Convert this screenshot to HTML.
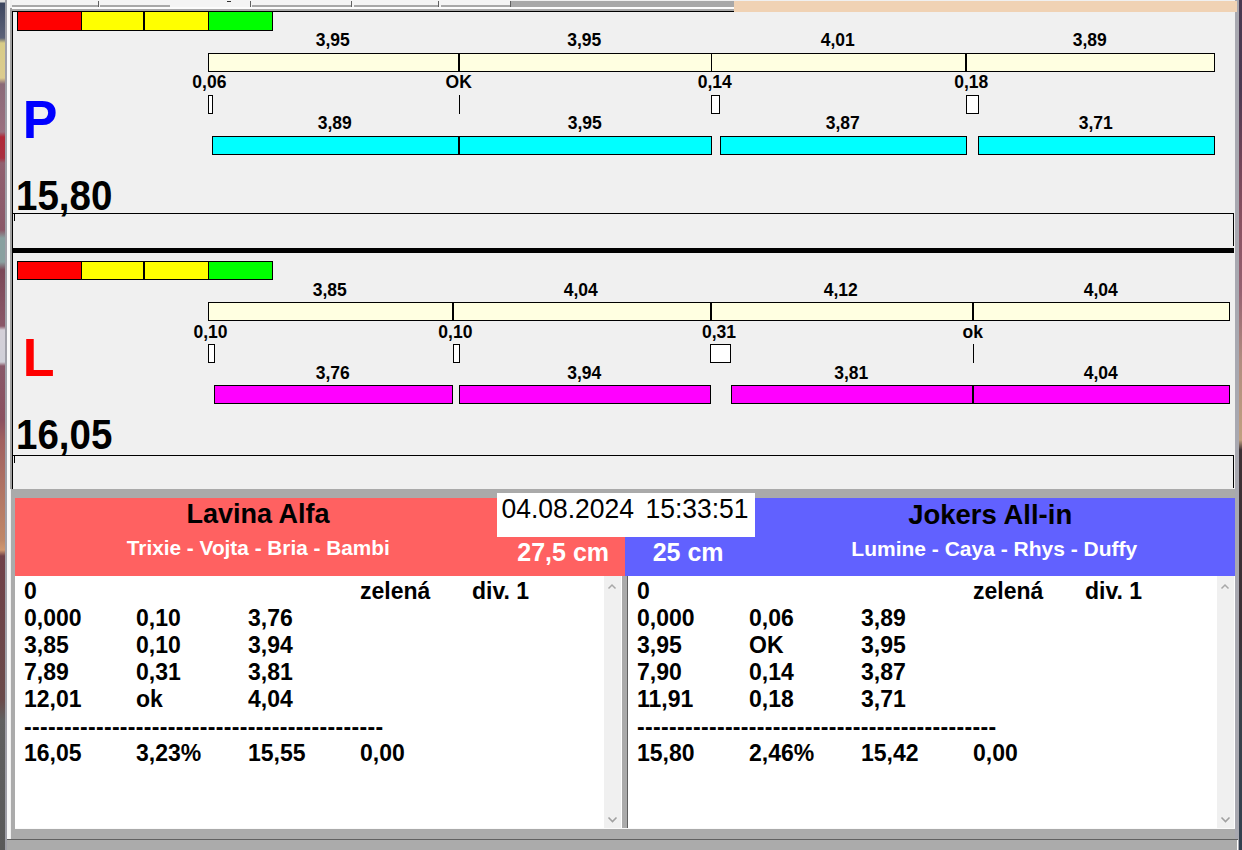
<!DOCTYPE html>
<html><head><meta charset="utf-8">
<style>
html,body{margin:0;padding:0;width:1242px;height:850px;overflow:hidden;background:#f0f0f0;font-family:"Liberation Sans",sans-serif;}
.a{position:absolute;}
.b{font-weight:bold;}
.lbl{position:absolute;font-weight:bold;font-size:17px;line-height:17px;white-space:pre;text-align:center;width:120px;color:#000;}
.bar{position:absolute;box-sizing:border-box;border:1px solid #000;}
.lb{position:absolute;font-weight:bold;font-size:22px;line-height:27px;white-space:pre;color:#000;letter-spacing:0.7px;}
</style></head><body>
<!-- left desktop strip -->
<div class="a" style="left:0px;top:0;width:5px;height:850px;background:linear-gradient(#e0e0e0 0px,#e0e0e0 2px,#3c4660 3px,#5c6278 38px,#d8cc88 43px,#dccc90 78px,#8a6a78 84px,#9a7080 132px,#b02838 137px,#a83040 158px,#906070 163px,#8a5868 230px,#88a0a0 238px,#8aa0a0 262px,#7a4858 270px,#8a5868 326px,#d4d0d8 330px,#d0d0d8 362px,#885868 366px,#8a5060 420px,#a06060 440px,#c08868 540px,#d09870 550px,#704048 556px,#6a4a4a 700px,#606060 720px,#5a5a5a 850px)"></div>
<div class="a" style="left:5px;top:0;width:2px;height:850px;background:#a0a0a8"></div>
<div class="a" style="left:7px;top:0;width:3px;height:850px;background:#f8f8f8"></div>
<div class="a" style="left:10px;top:8px;width:2px;height:481px;background:#a0a0a0"></div>
<!-- right desktop strip -->
<div class="a" style="left:1235px;top:0;width:4px;height:850px;background:#a8a8b0"></div>
<div class="a" style="left:1239px;top:0;width:3px;height:850px;background:linear-gradient(#483850 0px,#4a3a52 90px,#704458 160px,#885060 220px,#946070 290px,#b08c80 360px,#c0a080 440px,#3c3034 450px,#3a3036 630px,#384048 700px,#334050 850px)"></div>

<!-- tab strip -->
<div class="a" style="left:12px;top:0;width:498px;height:7px;background:#f4f4f4"></div>
<div class="a" style="left:12px;top:5px;width:86px;height:2px;background:#a8a8a8"></div>
<div class="a" style="left:100px;top:5px;width:70px;height:2px;background:#a8a8a8"></div>
<div class="a" style="left:252px;top:5px;width:99px;height:2px;background:#a8a8a8"></div>
<div class="a" style="left:354px;top:5px;width:84px;height:2px;background:#a8a8a8"></div>
<div class="a" style="left:441px;top:5px;width:69px;height:2px;background:#a8a8a8"></div>
<div class="a" style="left:98px;top:1px;width:1px;height:6px;background:#606060"></div>
<div class="a" style="left:250px;top:1px;width:1px;height:6px;background:#606060"></div>
<div class="a" style="left:351px;top:1px;width:1px;height:6px;background:#606060"></div>
<div class="a" style="left:438px;top:1px;width:1px;height:6px;background:#606060"></div>
<div class="a" style="left:510px;top:1px;width:225px;height:6px;background:#a8a8a8"></div>
<div class="a" style="left:510px;top:1px;width:1px;height:6px;background:#606060"></div>
<div class="a" style="left:12px;top:7px;width:722px;height:2px;background:#fcfcfc"></div>
<div class="a" style="left:12px;top:9px;width:722px;height:2px;background:#a8a8a8"></div>
<div class="a" style="left:12px;top:11px;width:722px;height:1px;background:#000"></div>
<div class="a" style="left:734px;top:1px;width:503px;height:11px;background:#f0d2b4"></div>

<div class="a" style="left:227px;top:1px;width:4px;height:1px;background:#303030"></div>
<div class="a" style="left:12px;top:11px;width:1px;height:478px;background:#000"></div>
<div class="a" style="left:17px;top:11px;width:256px;height:20px;background:#ff0000;box-sizing:border-box;border-style:solid;border-color:#000;border-width:1px 0px 1px 1px"></div>
<div class="a" style="left:81px;top:11px;width:63px;height:20px;background:#ffff00;box-sizing:border-box;border-style:solid;border-color:#000;border-width:1px 0px 1px 1px"></div>
<div class="a" style="left:143px;top:11px;width:65px;height:20px;background:#ffff00;box-sizing:border-box;border-style:solid;border-color:#000;border-width:1px 0px 1px 2px"></div>
<div class="a" style="left:208px;top:11px;width:65px;height:20px;background:#00ff00;box-sizing:border-box;border-style:solid;border-color:#000;border-width:1px 1px 1px 1px"></div>
<div class="a" style="left:22.8px;top:93.98px;font-size:52px;line-height:52px;font-weight:bold;color:#0000ff;white-space:pre;letter-spacing:0px;transform:scaleY(1.035);transform-origin:0 44px">P</div>
<div class="a" style="left:208px;top:53px;width:1007px;height:19px;background:#ffffe1;box-sizing:border-box;border-style:solid;border-color:#000;border-width:1px 1px 1px 1px"></div>
<div class="a" style="left:132.70px;top:31.99px;width:400px;text-align:center;font-size:17.5px;line-height:17.5px;font-weight:bold;color:#000;white-space:pre;letter-spacing:0px;">3,95</div>
<div class="a" style="left:384.20px;top:31.99px;width:400px;text-align:center;font-size:17.5px;line-height:17.5px;font-weight:bold;color:#000;white-space:pre;letter-spacing:0px;">3,95</div>
<div class="a" style="left:637.70px;top:31.99px;width:400px;text-align:center;font-size:17.5px;line-height:17.5px;font-weight:bold;color:#000;white-space:pre;letter-spacing:0px;">4,01</div>
<div class="a" style="left:889.70px;top:31.99px;width:400px;text-align:center;font-size:17.5px;line-height:17.5px;font-weight:bold;color:#000;white-space:pre;letter-spacing:0px;">3,89</div>
<div class="a" style="left:458px;top:53px;width:2px;height:19px;background:#000;"></div>
<div class="a" style="left:711px;top:53px;width:1px;height:19px;background:#000;"></div>
<div class="a" style="left:965px;top:53px;width:2px;height:19px;background:#000;"></div>
<div class="a" style="left:9.40px;top:73.99px;width:400px;text-align:center;font-size:17.5px;line-height:17.5px;font-weight:bold;color:#000;white-space:pre;letter-spacing:0px;">0,06</div>
<div class="a" style="left:258.70px;top:73.99px;width:400px;text-align:center;font-size:17.5px;line-height:17.5px;font-weight:bold;color:#000;white-space:pre;letter-spacing:0px;">OK</div>
<div class="a" style="left:514.70px;top:73.99px;width:400px;text-align:center;font-size:17.5px;line-height:17.5px;font-weight:bold;color:#000;white-space:pre;letter-spacing:0px;">0,14</div>
<div class="a" style="left:771.30px;top:73.99px;width:400px;text-align:center;font-size:17.5px;line-height:17.5px;font-weight:bold;color:#000;white-space:pre;letter-spacing:0px;">0,18</div>
<div class="a" style="left:208px;top:95px;width:5px;height:19px;background:#ffffff;box-sizing:border-box;border-style:solid;border-color:#000;border-width:1px 1px 1px 1px"></div>
<div class="a" style="left:459px;top:95px;width:1px;height:19px;background:#000;"></div>
<div class="a" style="left:711px;top:95px;width:9px;height:19px;background:#ffffff;box-sizing:border-box;border-style:solid;border-color:#000;border-width:1px 1px 1px 1px"></div>
<div class="a" style="left:966px;top:95px;width:13px;height:19px;background:#ffffff;box-sizing:border-box;border-style:solid;border-color:#000;border-width:1px 1px 1px 1px"></div>
<div class="a" style="left:212px;top:136px;width:247px;height:19px;background:#00ffff;box-sizing:border-box;border-style:solid;border-color:#000;border-width:1px 1px 1px 1px"></div>
<div class="a" style="left:134.70px;top:114.99px;width:400px;text-align:center;font-size:17.5px;line-height:17.5px;font-weight:bold;color:#000;white-space:pre;letter-spacing:0px;">3,89</div>
<div class="a" style="left:459px;top:136px;width:253px;height:19px;background:#00ffff;box-sizing:border-box;border-style:solid;border-color:#000;border-width:1px 1px 1px 1px"></div>
<div class="a" style="left:384.70px;top:114.99px;width:400px;text-align:center;font-size:17.5px;line-height:17.5px;font-weight:bold;color:#000;white-space:pre;letter-spacing:0px;">3,95</div>
<div class="a" style="left:720px;top:136px;width:247px;height:19px;background:#00ffff;box-sizing:border-box;border-style:solid;border-color:#000;border-width:1px 1px 1px 1px"></div>
<div class="a" style="left:642.70px;top:114.99px;width:400px;text-align:center;font-size:17.5px;line-height:17.5px;font-weight:bold;color:#000;white-space:pre;letter-spacing:0px;">3,87</div>
<div class="a" style="left:978px;top:136px;width:237px;height:19px;background:#00ffff;box-sizing:border-box;border-style:solid;border-color:#000;border-width:1px 1px 1px 1px"></div>
<div class="a" style="left:895.70px;top:114.99px;width:400px;text-align:center;font-size:17.5px;line-height:17.5px;font-weight:bold;color:#000;white-space:pre;letter-spacing:0px;">3,71</div>
<div class="a" style="left:16px;top:177.81px;font-size:38.5px;line-height:38.5px;font-weight:bold;color:#000;white-space:pre;letter-spacing:0px;transform:scaleY(1.09);transform-origin:0 32.6px">15,80</div>
<div class="a" style="left:12px;top:213px;width:1222px;height:33px;background:transparent;box-sizing:border-box;border-style:solid;border-color:#000;border-width:1px 1px 0px 0px"></div>
<div class="a" style="left:14px;top:214px;width:1px;height:7px;background:#000;"></div>
<div class="a" style="left:12px;top:248px;width:1222px;height:5px;background:#000;"></div>
<div class="a" style="left:17px;top:261px;width:256px;height:19px;background:#ff0000;box-sizing:border-box;border-style:solid;border-color:#000;border-width:1px 0px 1px 1px"></div>
<div class="a" style="left:81px;top:261px;width:63px;height:19px;background:#ffff00;box-sizing:border-box;border-style:solid;border-color:#000;border-width:1px 0px 1px 1px"></div>
<div class="a" style="left:143px;top:261px;width:65px;height:19px;background:#ffff00;box-sizing:border-box;border-style:solid;border-color:#000;border-width:1px 0px 1px 2px"></div>
<div class="a" style="left:208px;top:261px;width:65px;height:19px;background:#00ff00;box-sizing:border-box;border-style:solid;border-color:#000;border-width:1px 1px 1px 1px"></div>
<div class="a" style="left:22.8px;top:331.98px;font-size:52px;line-height:52px;font-weight:bold;color:#ff0000;white-space:pre;letter-spacing:0px;transform:scaleY(1.035);transform-origin:0 44px">L</div>
<div class="a" style="left:208px;top:302px;width:1022px;height:19px;background:#ffffe1;box-sizing:border-box;border-style:solid;border-color:#000;border-width:1px 1px 1px 1px"></div>
<div class="a" style="left:129.70px;top:281.99px;width:400px;text-align:center;font-size:17.5px;line-height:17.5px;font-weight:bold;color:#000;white-space:pre;letter-spacing:0px;">3,85</div>
<div class="a" style="left:380.70px;top:281.99px;width:400px;text-align:center;font-size:17.5px;line-height:17.5px;font-weight:bold;color:#000;white-space:pre;letter-spacing:0px;">4,04</div>
<div class="a" style="left:640.70px;top:281.99px;width:400px;text-align:center;font-size:17.5px;line-height:17.5px;font-weight:bold;color:#000;white-space:pre;letter-spacing:0px;">4,12</div>
<div class="a" style="left:900.70px;top:281.99px;width:400px;text-align:center;font-size:17.5px;line-height:17.5px;font-weight:bold;color:#000;white-space:pre;letter-spacing:0px;">4,04</div>
<div class="a" style="left:452px;top:302px;width:2px;height:19px;background:#000;"></div>
<div class="a" style="left:710px;top:302px;width:2px;height:19px;background:#000;"></div>
<div class="a" style="left:972px;top:302px;width:2px;height:19px;background:#000;"></div>
<div class="a" style="left:10.50px;top:323.99px;width:400px;text-align:center;font-size:17.5px;line-height:17.5px;font-weight:bold;color:#000;white-space:pre;letter-spacing:0px;">0,10</div>
<div class="a" style="left:255.40px;top:323.99px;width:400px;text-align:center;font-size:17.5px;line-height:17.5px;font-weight:bold;color:#000;white-space:pre;letter-spacing:0px;">0,10</div>
<div class="a" style="left:519.00px;top:323.99px;width:400px;text-align:center;font-size:17.5px;line-height:17.5px;font-weight:bold;color:#000;white-space:pre;letter-spacing:0px;">0,31</div>
<div class="a" style="left:772.70px;top:323.99px;width:400px;text-align:center;font-size:17.5px;line-height:17.5px;font-weight:bold;color:#000;white-space:pre;letter-spacing:0px;">ok</div>
<div class="a" style="left:208px;top:344px;width:7px;height:19px;background:#ffffff;box-sizing:border-box;border-style:solid;border-color:#000;border-width:1px 1px 1px 1px"></div>
<div class="a" style="left:453px;top:344px;width:7px;height:19px;background:#ffffff;box-sizing:border-box;border-style:solid;border-color:#000;border-width:1px 1px 1px 1px"></div>
<div class="a" style="left:710px;top:344px;width:21px;height:19px;background:#ffffff;box-sizing:border-box;border-style:solid;border-color:#000;border-width:1px 1px 1px 1px"></div>
<div class="a" style="left:973px;top:344px;width:1px;height:19px;background:#000;"></div>
<div class="a" style="left:214px;top:385px;width:239px;height:19px;background:#ff00ff;box-sizing:border-box;border-style:solid;border-color:#000;border-width:1px 1px 1px 1px"></div>
<div class="a" style="left:132.70px;top:364.99px;width:400px;text-align:center;font-size:17.5px;line-height:17.5px;font-weight:bold;color:#000;white-space:pre;letter-spacing:0px;">3,76</div>
<div class="a" style="left:459px;top:385px;width:252px;height:19px;background:#ff00ff;box-sizing:border-box;border-style:solid;border-color:#000;border-width:1px 1px 1px 1px"></div>
<div class="a" style="left:384.20px;top:364.99px;width:400px;text-align:center;font-size:17.5px;line-height:17.5px;font-weight:bold;color:#000;white-space:pre;letter-spacing:0px;">3,94</div>
<div class="a" style="left:731px;top:385px;width:242px;height:19px;background:#ff00ff;box-sizing:border-box;border-style:solid;border-color:#000;border-width:1px 1px 1px 1px"></div>
<div class="a" style="left:651.20px;top:364.99px;width:400px;text-align:center;font-size:17.5px;line-height:17.5px;font-weight:bold;color:#000;white-space:pre;letter-spacing:0px;">3,81</div>
<div class="a" style="left:973px;top:385px;width:257px;height:19px;background:#ff00ff;box-sizing:border-box;border-style:solid;border-color:#000;border-width:1px 1px 1px 1px"></div>
<div class="a" style="left:900.70px;top:364.99px;width:400px;text-align:center;font-size:17.5px;line-height:17.5px;font-weight:bold;color:#000;white-space:pre;letter-spacing:0px;">4,04</div>
<div class="a" style="left:16px;top:416.81px;font-size:38.5px;line-height:38.5px;font-weight:bold;color:#000;white-space:pre;letter-spacing:0px;transform:scaleY(1.09);transform-origin:0 32.6px">16,05</div>
<div class="a" style="left:12px;top:455px;width:1222px;height:33px;background:transparent;box-sizing:border-box;border-style:solid;border-color:#000;border-width:1px 1px 0px 0px"></div>
<div class="a" style="left:14px;top:456px;width:1px;height:7px;background:#000;"></div>
<div class="a" style="left:11px;top:489px;width:1224px;height:9px;background:#aaaaaa;"></div>
<div class="a" style="left:11px;top:497px;width:4px;height:342px;background:#ababab;"></div>
<div class="a" style="left:15px;top:498px;width:610px;height:78px;background:#ff6161;"></div>
<div class="a" style="left:625px;top:498px;width:610px;height:78px;background:#6161ff;"></div>
<div class="a" style="left:497px;top:493px;width:258px;height:44px;background:#ffffff;"></div>
<div class="a" style="left:425.00px;top:496.37px;width:400px;text-align:center;font-size:26.5px;line-height:26.5px;font-weight:normal;color:#000;white-space:pre;letter-spacing:0px;word-spacing:4px;transform:scaleY(1.06);transform-origin:0 22.4px">04.08.2024 15:33:51</div>
<div class="a" style="left:58.00px;top:500.64px;width:400px;text-align:center;font-size:27px;line-height:27px;font-weight:bold;color:#000;white-space:pre;letter-spacing:0px;">Lavina Alfa</div>
<div class="a" style="left:58.30px;top:538.39px;width:400px;text-align:center;font-size:20.8px;line-height:20.8px;font-weight:bold;color:#ffffff;white-space:pre;letter-spacing:0px;">Trixie - Vojta - Bria - Bambi</div>
<div class="a" style="left:363.20px;top:539.84px;width:400px;text-align:center;font-size:25px;line-height:25px;font-weight:bold;color:#ffffff;white-space:pre;letter-spacing:0px;">27,5 cm</div>
<div class="a" style="left:488.10px;top:539.84px;width:400px;text-align:center;font-size:25px;line-height:25px;font-weight:bold;color:#ffffff;white-space:pre;letter-spacing:0px;">25 cm</div>
<div class="a" style="left:790.20px;top:500.52px;width:400px;text-align:center;font-size:27.5px;line-height:27.5px;font-weight:bold;color:#000;white-space:pre;letter-spacing:0px;">Jokers All-in</div>
<div class="a" style="left:794.30px;top:538.42px;width:400px;text-align:center;font-size:21px;line-height:21px;font-weight:bold;color:#ffffff;white-space:pre;letter-spacing:0px;">Lumine - Caya - Rhys - Duffy</div>
<div class="a" style="left:15px;top:576px;width:607px;height:252px;background:#ffffff;"></div>
<div class="a" style="left:604px;top:576px;width:17px;height:252px;background:#f0f0f0;"></div>
<svg class="a" style="left:604px;top:576px" width="17" height="252"><path d="M4.5 12.5 L8 9 L11.5 12.5" stroke="#a8a8a8" stroke-width="1.5" fill="none"/><path d="M4.5 241.5 L8.5 245.5 L12.5 241.5" stroke="#a0a0a0" stroke-width="1.6" fill="none"/></svg>
<div class="a" style="left:24px;top:580.03px;font-size:23px;line-height:23px;font-weight:bold;color:#000;white-space:pre;letter-spacing:0px;">0</div>
<div class="a" style="left:360px;top:580.03px;font-size:23px;line-height:23px;font-weight:bold;color:#000;white-space:pre;letter-spacing:0px;">zelená</div>
<div class="a" style="left:472px;top:580.03px;font-size:23px;line-height:23px;font-weight:bold;color:#000;white-space:pre;letter-spacing:0px;">div. 1</div>
<div class="a" style="left:24px;top:607.03px;font-size:23px;line-height:23px;font-weight:bold;color:#000;white-space:pre;letter-spacing:0px;">0,000</div>
<div class="a" style="left:136px;top:607.03px;font-size:23px;line-height:23px;font-weight:bold;color:#000;white-space:pre;letter-spacing:0px;">0,10</div>
<div class="a" style="left:248px;top:607.03px;font-size:23px;line-height:23px;font-weight:bold;color:#000;white-space:pre;letter-spacing:0px;">3,76</div>
<div class="a" style="left:24px;top:634.03px;font-size:23px;line-height:23px;font-weight:bold;color:#000;white-space:pre;letter-spacing:0px;">3,85</div>
<div class="a" style="left:136px;top:634.03px;font-size:23px;line-height:23px;font-weight:bold;color:#000;white-space:pre;letter-spacing:0px;">0,10</div>
<div class="a" style="left:248px;top:634.03px;font-size:23px;line-height:23px;font-weight:bold;color:#000;white-space:pre;letter-spacing:0px;">3,94</div>
<div class="a" style="left:24px;top:661.03px;font-size:23px;line-height:23px;font-weight:bold;color:#000;white-space:pre;letter-spacing:0px;">7,89</div>
<div class="a" style="left:136px;top:661.03px;font-size:23px;line-height:23px;font-weight:bold;color:#000;white-space:pre;letter-spacing:0px;">0,31</div>
<div class="a" style="left:248px;top:661.03px;font-size:23px;line-height:23px;font-weight:bold;color:#000;white-space:pre;letter-spacing:0px;">3,81</div>
<div class="a" style="left:24px;top:688.03px;font-size:23px;line-height:23px;font-weight:bold;color:#000;white-space:pre;letter-spacing:0px;">12,01</div>
<div class="a" style="left:136px;top:688.03px;font-size:23px;line-height:23px;font-weight:bold;color:#000;white-space:pre;letter-spacing:0px;">ok</div>
<div class="a" style="left:248px;top:688.03px;font-size:23px;line-height:23px;font-weight:bold;color:#000;white-space:pre;letter-spacing:0px;">4,04</div>
<div class="a" style="left:24px;top:716.03px;font-size:23px;line-height:23px;font-weight:bold;color:#000;white-space:pre;letter-spacing:0.33px;">---------------------------------------------</div>
<div class="a" style="left:24px;top:742.03px;font-size:23px;line-height:23px;font-weight:bold;color:#000;white-space:pre;letter-spacing:0px;">16,05</div>
<div class="a" style="left:136px;top:742.03px;font-size:23px;line-height:23px;font-weight:bold;color:#000;white-space:pre;letter-spacing:0px;">3,23%</div>
<div class="a" style="left:248px;top:742.03px;font-size:23px;line-height:23px;font-weight:bold;color:#000;white-space:pre;letter-spacing:0px;">15,55</div>
<div class="a" style="left:360px;top:742.03px;font-size:23px;line-height:23px;font-weight:bold;color:#000;white-space:pre;letter-spacing:0px;">0,00</div>
<div class="a" style="left:622px;top:576px;width:6px;height:252px;background:#ababab;"></div>
<div class="a" style="left:627px;top:576px;width:1px;height:252px;background:#606060;"></div>
<div class="a" style="left:628px;top:576px;width:607px;height:252px;background:#ffffff;"></div>
<div class="a" style="left:1217px;top:576px;width:17px;height:252px;background:#f0f0f0;"></div>
<svg class="a" style="left:1217px;top:576px" width="17" height="252"><path d="M4.5 12.5 L8 9 L11.5 12.5" stroke="#a8a8a8" stroke-width="1.5" fill="none"/><path d="M4.5 241.5 L8.5 245.5 L12.5 241.5" stroke="#a0a0a0" stroke-width="1.6" fill="none"/></svg>
<div class="a" style="left:637px;top:580.03px;font-size:23px;line-height:23px;font-weight:bold;color:#000;white-space:pre;letter-spacing:0px;">0</div>
<div class="a" style="left:973px;top:580.03px;font-size:23px;line-height:23px;font-weight:bold;color:#000;white-space:pre;letter-spacing:0px;">zelená</div>
<div class="a" style="left:1085px;top:580.03px;font-size:23px;line-height:23px;font-weight:bold;color:#000;white-space:pre;letter-spacing:0px;">div. 1</div>
<div class="a" style="left:637px;top:607.03px;font-size:23px;line-height:23px;font-weight:bold;color:#000;white-space:pre;letter-spacing:0px;">0,000</div>
<div class="a" style="left:749px;top:607.03px;font-size:23px;line-height:23px;font-weight:bold;color:#000;white-space:pre;letter-spacing:0px;">0,06</div>
<div class="a" style="left:861px;top:607.03px;font-size:23px;line-height:23px;font-weight:bold;color:#000;white-space:pre;letter-spacing:0px;">3,89</div>
<div class="a" style="left:637px;top:634.03px;font-size:23px;line-height:23px;font-weight:bold;color:#000;white-space:pre;letter-spacing:0px;">3,95</div>
<div class="a" style="left:749px;top:634.03px;font-size:23px;line-height:23px;font-weight:bold;color:#000;white-space:pre;letter-spacing:0px;">OK</div>
<div class="a" style="left:861px;top:634.03px;font-size:23px;line-height:23px;font-weight:bold;color:#000;white-space:pre;letter-spacing:0px;">3,95</div>
<div class="a" style="left:637px;top:661.03px;font-size:23px;line-height:23px;font-weight:bold;color:#000;white-space:pre;letter-spacing:0px;">7,90</div>
<div class="a" style="left:749px;top:661.03px;font-size:23px;line-height:23px;font-weight:bold;color:#000;white-space:pre;letter-spacing:0px;">0,14</div>
<div class="a" style="left:861px;top:661.03px;font-size:23px;line-height:23px;font-weight:bold;color:#000;white-space:pre;letter-spacing:0px;">3,87</div>
<div class="a" style="left:637px;top:688.03px;font-size:23px;line-height:23px;font-weight:bold;color:#000;white-space:pre;letter-spacing:0px;">11,91</div>
<div class="a" style="left:749px;top:688.03px;font-size:23px;line-height:23px;font-weight:bold;color:#000;white-space:pre;letter-spacing:0px;">0,18</div>
<div class="a" style="left:861px;top:688.03px;font-size:23px;line-height:23px;font-weight:bold;color:#000;white-space:pre;letter-spacing:0px;">3,71</div>
<div class="a" style="left:637px;top:716.03px;font-size:23px;line-height:23px;font-weight:bold;color:#000;white-space:pre;letter-spacing:0.33px;">---------------------------------------------</div>
<div class="a" style="left:637px;top:742.03px;font-size:23px;line-height:23px;font-weight:bold;color:#000;white-space:pre;letter-spacing:0px;">15,80</div>
<div class="a" style="left:749px;top:742.03px;font-size:23px;line-height:23px;font-weight:bold;color:#000;white-space:pre;letter-spacing:0px;">2,46%</div>
<div class="a" style="left:861px;top:742.03px;font-size:23px;line-height:23px;font-weight:bold;color:#000;white-space:pre;letter-spacing:0px;">15,42</div>
<div class="a" style="left:973px;top:742.03px;font-size:23px;line-height:23px;font-weight:bold;color:#000;white-space:pre;letter-spacing:0px;">0,00</div>
<div class="a" style="left:15px;top:828px;width:1220px;height:1px;background:#fafafa;"></div>
<div class="a" style="left:15px;top:829px;width:1220px;height:10px;background:#ababab;"></div>
<div class="a" style="left:7px;top:839px;width:1231px;height:1px;background:#606060;"></div>
<div class="a" style="left:7px;top:840px;width:1230px;height:10px;background:#ababab;"></div>
<div class="a" style="left:1237px;top:840px;width:1px;height:10px;background:#ffffff;"></div>
</body></html>
